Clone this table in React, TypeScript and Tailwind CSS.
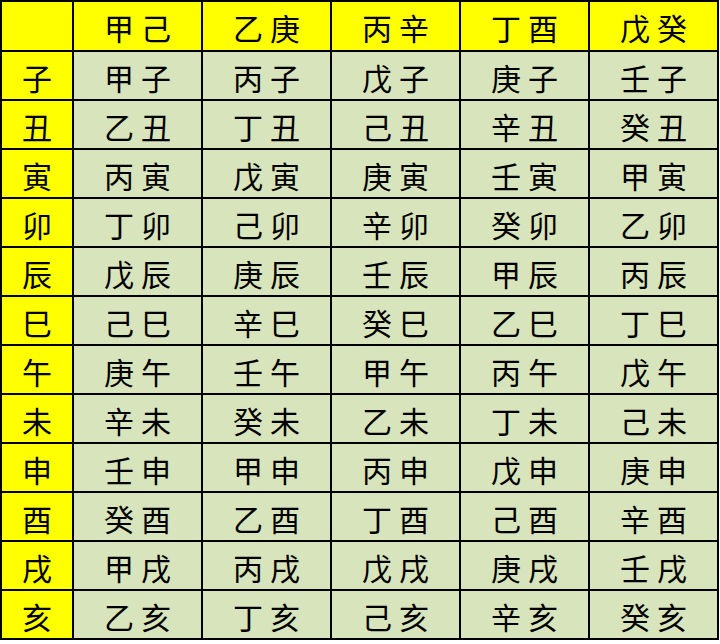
import React from 'react';

const header = ['甲己', '乙庚', '丙辛', '丁酉', '戊癸'];

const rows: [string, string[]][] = [
  ['子', ['甲子', '丙子', '戊子', '庚子', '壬子']],
  ['丑', ['乙丑', '丁丑', '己丑', '辛丑', '癸丑']],
  ['寅', ['丙寅', '戊寅', '庚寅', '壬寅', '甲寅']],
  ['卯', ['丁卯', '己卯', '辛卯', '癸卯', '乙卯']],
  ['辰', ['戊辰', '庚辰', '壬辰', '甲辰', '丙辰']],
  ['巳', ['己巳', '辛巳', '癸巳', '乙巳', '丁巳']],
  ['午', ['庚午', '壬午', '甲午', '丙午', '戊午']],
  ['未', ['辛未', '癸未', '乙未', '丁未', '己未']],
  ['申', ['壬申', '甲申', '丙申', '戊申', '庚申']],
  ['酉', ['癸酉', '乙酉', '丁酉', '己酉', '辛酉']],
  ['戌', ['甲戌', '丙戌', '戊戌', '庚戌', '壬戌']],
  ['亥', ['乙亥', '丁亥', '己亥', '辛亥', '癸亥']],
];

const cell = 'flex items-center justify-center text-[30px] leading-none text-black pt-[2px]';

const App: React.FC = () => {
  return (
    <div
      className="w-[720px] h-[644px] bg-white"
      style={{ fontFamily: '"Noto Sans CJK SC", "Noto Sans CJK TC", sans-serif' }}
    >
      <div className="grid w-[719px] grid-cols-[70px_repeat(5,127px)] grid-rows-[48px_repeat(12,47px)] gap-[2px] bg-black p-[2px]">
        {/* шапка */}
        <div className="bg-[#ffff00]" />
        {header.map((h) => (
          <div key={h} className={`${cell} bg-[#ffff00] tracking-[7px] pl-[7px]`}>
            {h}
          </div>
        ))}
        {rows.map(([branch, items]) => (
          <React.Fragment key={branch}>
            <div className={`${cell} bg-[#ffff00]`}>{branch}</div>
            {items.map((t) => (
              <div key={t} className={`${cell} bg-[#d8e4bc] tracking-[7px] pl-[7px]`}>
                {t}
              </div>
            ))}
          </React.Fragment>
        ))}
      </div>
    </div>
  );
};

export default App;
